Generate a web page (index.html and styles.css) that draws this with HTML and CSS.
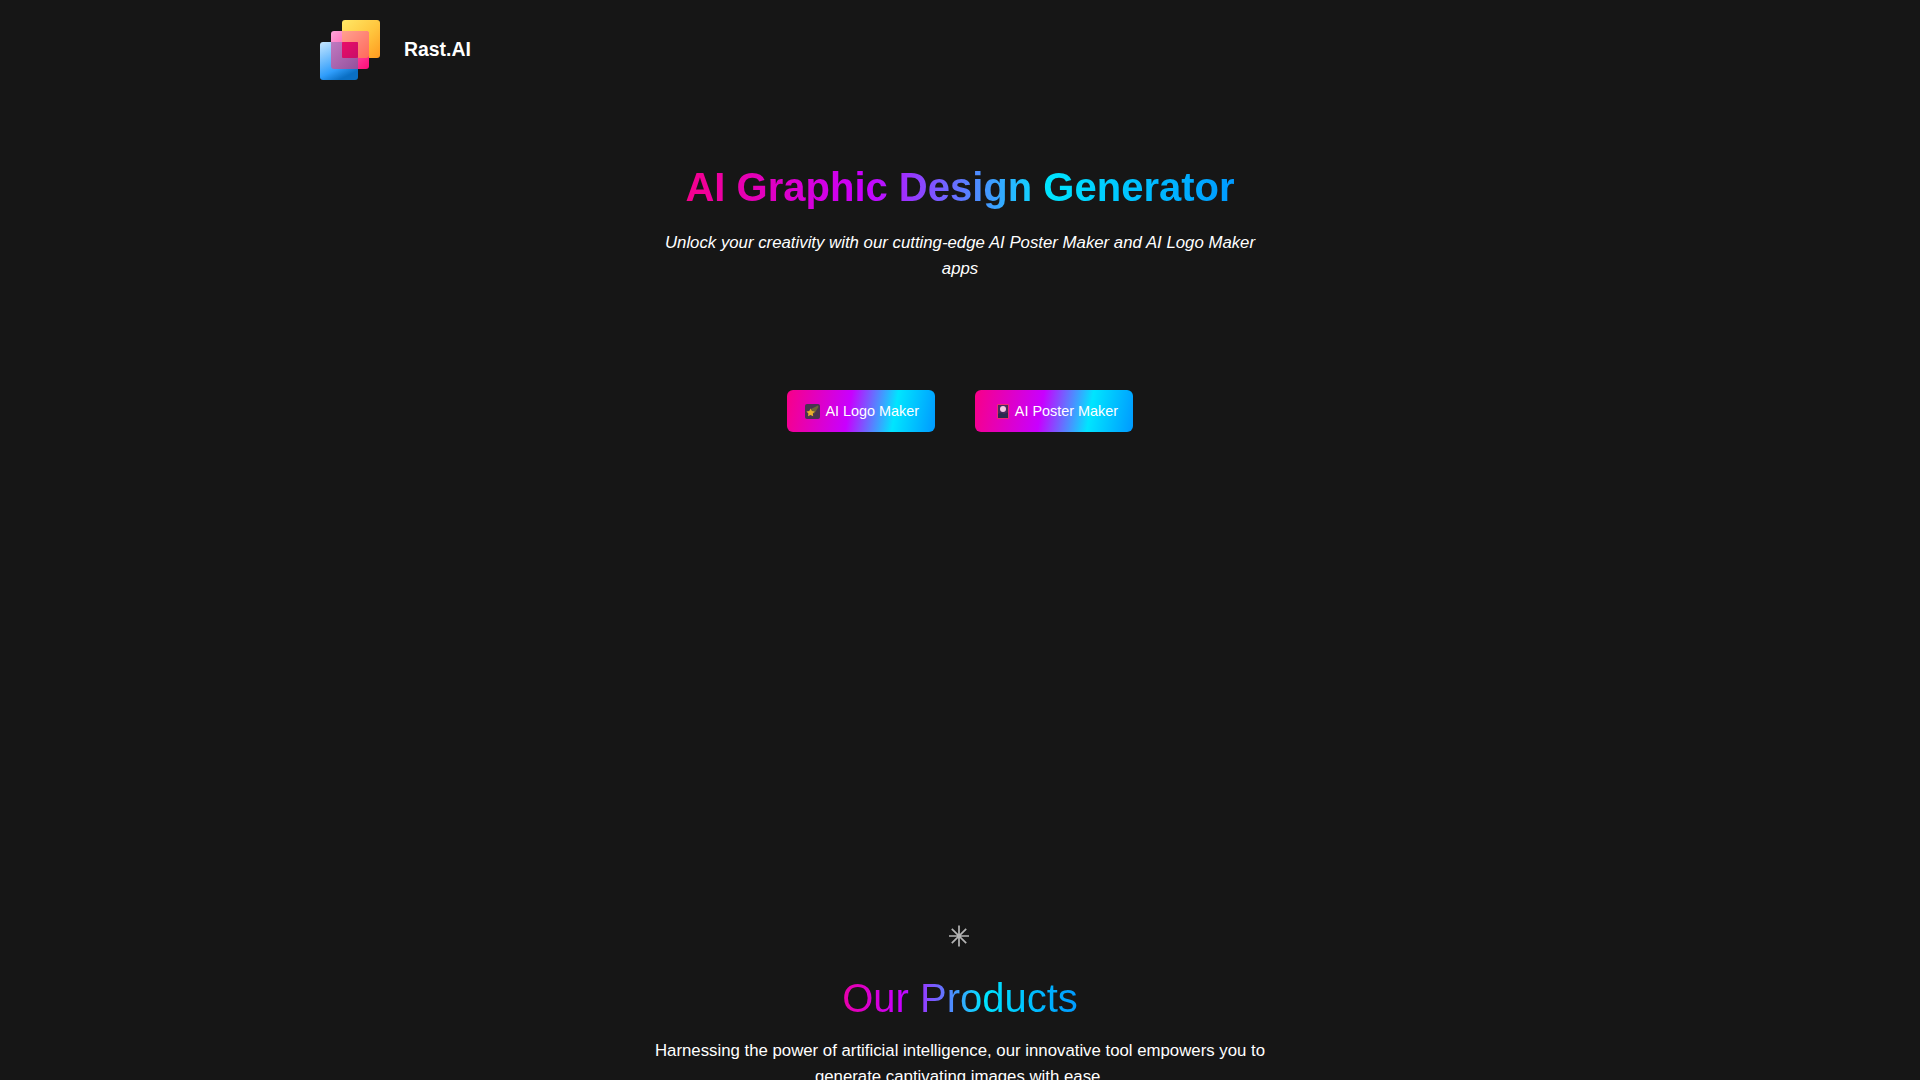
FILE: index.html
```html
<!DOCTYPE html>
<html lang="en">
<head>
<meta charset="utf-8">
<title>Rast.AI</title>
<link rel="stylesheet" href="styles.css">
</head>
<body>
<header class="topbar">
  <svg class="logo" width="60" height="60" viewBox="0 0 60 60" aria-hidden="true">
    <defs>
      <linearGradient id="gy" x1="0" y1="0" x2="1" y2="1"><stop offset="0" stop-color="#ffe866"/><stop offset=".55" stop-color="#ffc53d"/><stop offset="1" stop-color="#ff9a1f"/></linearGradient>
      <linearGradient id="gp" x1="0" y1="0" x2="1" y2="1"><stop offset="0" stop-color="#ffa6dc"/><stop offset=".6" stop-color="#ff4aa0"/><stop offset="1" stop-color="#ff0a78"/></linearGradient>
      <linearGradient id="gs" x1="0" y1="0" x2="1" y2="1"><stop offset="0" stop-color="#ffa090"/><stop offset="1" stop-color="#ff6a5c"/></linearGradient>
      <linearGradient id="gb" x1="0" y1="0" x2=".5" y2="1"><stop offset="0" stop-color="#c6e7ff"/><stop offset=".75" stop-color="#2f9dfb"/><stop offset="1" stop-color="#0a6fc4"/></linearGradient>
      <linearGradient id="gv" x1="0" y1="0" x2="1" y2="1"><stop offset="0" stop-color="#c07ac0"/><stop offset="1" stop-color="#94509c"/></linearGradient>
      <linearGradient id="gc" x1="0" y1="0" x2="1" y2="1"><stop offset="0" stop-color="#ea0668"/><stop offset="1" stop-color="#c81268"/></linearGradient>
      <filter id="soft" x="-20%" y="-20%" width="140%" height="140%"><feGaussianBlur stdDeviation=".6"/></filter>
    </defs>
    <rect x="22" y="0" width="38" height="38" rx="3" fill="url(#gy)"/>
    <rect x="11" y="11" width="38" height="38" rx="3" fill="url(#gp)"/>
    <path d="M22 11H46a3 3 0 0 1 3 3V35a3 3 0 0 1-3 3H22Z" fill="url(#gs)"/>
    <rect x="0" y="22" width="38" height="38" rx="3" fill="url(#gb)"/>
    <path d="M11 22H38V49H14a3 3 0 0 1-3-3Z" fill="url(#gv)"/>
    <rect x="22" y="22" width="16" height="16" rx="1" fill="url(#gc)" filter="url(#soft)"/>
  </svg>
  <span class="brand">Rast.AI</span>
</header>
<main>
  <section class="hero">
    <h1 class="hero-title"><span class="gradient-text">AI Graphic Design Generator</span></h1>
    <p class="hero-sub">Unlock your creativity with our cutting-edge AI Poster Maker and AI Logo Maker apps</p>
    <div class="actions">
      <a class="btn btn-logo" href="#">
        <svg class="emoji" width="15" height="15" viewBox="0 0 15 15" aria-hidden="true">
          <rect width="15" height="15" rx="2" fill="#4a3350"/>
          <path d="M6 5 L13 1.5 L13.5 3 L9 10Z" fill="#6e6436"/>
          <path d="M5.5 4.5 L7 7 L9.8 7.5 L7.8 9.5 L8.2 12.3 L5.5 11 L3 12.3 L3.4 9.5 L1.5 7.5 L4.3 7Z" fill="#e8b02c"/>
        </svg>
        <span>AI Logo Maker</span>
      </a>
      <a class="btn btn-poster" href="#">
        <svg class="emoji" width="15" height="15" viewBox="0 0 15 15" aria-hidden="true">
          <rect x="2" width="12" height="15" rx="1" fill="#ef2a6f"/>
          <rect x="3" y="1" width="10" height="13" fill="#4a2a5e"/>
          <circle cx="8" cy="5" r="3" fill="#f6c8e4"/>
          <path d="M3 10 L6 8.5 L9 10 L13 8.5 V14 H3Z" fill="#2a2a50"/>
        </svg>
        <span>AI Poster Maker</span>
      </a>
    </div>
  </section>
  <section class="products">
    <svg class="star" width="22" height="24" viewBox="0 0 22 24" aria-hidden="true">
      <path d="M11 1.5V22.5M1 12H21M3.8 4.8L18.2 19.2M18.2 4.8L3.8 19.2" stroke="#b4b4b4" stroke-width="1.7" fill="none"/>
    </svg>
    <h2 class="products-title"><span class="gradient-text gradient-short">Our Products</span></h2>
    <p class="products-sub">Harnessing the power of artificial intelligence, our innovative tool empowers you to generate captivating images with ease.</p>
  </section>
</main>
</body>
</html>
```
FILE: styles.css
```css
* { box-sizing: border-box; }
html, body { margin: 0; height: 100%; overflow: hidden; }
body {
  background: #161616;
  color: #fff;
  font-family: "Liberation Sans", Arial, sans-serif;
}
.topbar {
  display: flex;
  align-items: center;
  gap: 24px;
  padding: 20px 320px 0;
}
.logo { display: block; flex: none; }
.brand { font-size: 19.4px; font-weight: 700; margin-top: -2px; }
.hero {
  display: flex;
  flex-direction: column;
  align-items: center;
  padding-top: 84px;
}
.hero-title {
  margin: 0;
  font-size: 40px;
  font-weight: 700;
  line-height: 46px;
}
.gradient-text {
  display: inline-block;
  background: linear-gradient(90deg, #f5008c, #c800ff 33%, #00e5ff 66%, #0099ff);
  -webkit-background-clip: text;
  background-clip: text;
  color: transparent;
}
.gradient-short {
  background-image: linear-gradient(90deg, #e800a8, #c800ff 25%, #00e5ff 60%, #0099ff);
}
.hero-sub {
  margin: 20px 0 0;
  width: 600px;
  text-align: center;
  font-size: 16.8px;
  font-style: italic;
  line-height: 26px;
}
.actions {
  display: flex;
  gap: 40px;
  margin-top: 108px;
}
.btn {
  display: flex;
  align-items: center;
  justify-content: flex-end;
  gap: 5px;
  height: 42px;
  padding-right: 15px;
  border-radius: 6px;
  background: linear-gradient(100deg, #f80088, #c800ff 42%, #00e5ff 72%, #0099ff);
  color: #fff;
  font-size: 14.4px;
  text-decoration: none;
}
.btn-logo { width: 148px; padding-right: 16px; }
.btn-poster { width: 158px; }
.emoji { flex: none; }
.products {
  display: flex;
  flex-direction: column;
  align-items: center;
  padding-top: 492px;
}
.star { display: block; margin-left: -3px; }
.products-title {
  margin: 27px 0 0;
  font-size: 40px;
  font-weight: 400;
  line-height: 46px;
}
.products-sub {
  margin: 17px 0 0;
  width: 620px;
  text-align: center;
  font-size: 16.8px;
  line-height: 26px;
}
```
